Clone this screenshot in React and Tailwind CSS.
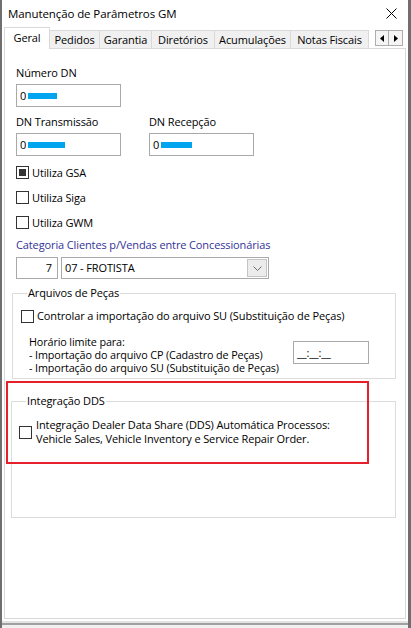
import React from "react";

const font = { fontFamily: '"Open Sans", "Liberation Sans", sans-serif' };

function CheckBox({ checked }) {
  return (
    <div className="w-[13px] h-[13px] border border-[#333] bg-white flex items-center justify-center shrink-0">
      {checked && <div className="w-[7px] h-[7px] bg-[#333]" />}
    </div>
  );
}

function NumBox({ width, bar }) {
  return (
    <div className={`${width} h-[23px] border border-[#a9a9a9] bg-white flex items-center pl-[3px]`}>
      <span>0</span>
      <div className="h-[6px] bg-[#00a4ef] ml-[2px]" style={{ width: bar }} />
    </div>
  );
}

const tabs = [
  { label: "Pedidos", w: "w-[50px]" },
  { label: "Garantia", w: "w-[52px]" },
  { label: "Diretórios", w: "w-[63px]" },
  { label: "Acumulações", w: "w-[76px]" },
  { label: "Notas Fiscais", w: "w-[78px]" },
];

export default function App() {
  return (
    <div
      className="relative w-[411px] h-[628px] overflow-hidden bg-[#f0f0f0] border-l-2 border-r-[3px] border-[#6f6f6f] flex flex-col text-[11px] leading-[14px] tracking-[-0.12px] text-black"
      style={font}
    >
      {/* title bar */}
      <div className="h-[27px] bg-white flex items-center justify-between pl-[6px] pr-[11px] shrink-0">
        <span className="text-[11.5px] tracking-[-0.1px]">Manutenção de Parâmetros GM</span>
        <svg width="11" height="11" viewBox="0 0 11 11">
          <path d="M0.5 0.5L10.5 10.5M10.5 0.5L0.5 10.5" stroke="#000" strokeWidth="1" />
        </svg>
      </div>

      {/* tabs */}
      <div className="h-[21px] bg-white flex items-end pl-[2px] pr-[2px] shrink-0 relative">
        <div className="w-[46px] h-[22px] bg-white border-t border-l border-r border-[#d9d9d9] -mb-px relative z-10 flex items-start justify-center pt-[3px]">
          Geral
        </div>
        {tabs.map((t) => (
          <div
            key={t.label}
            className={`${t.w} h-[18px] bg-[#f0f0f0] border-t border-r border-[#d9d9d9] flex items-center justify-center shrink-0`}
          >
            {t.label}
          </div>
        ))}
        <div className="absolute right-[5px] top-[3px] flex">
          <div className="w-[14px] h-[16px] border border-[#adadad] bg-[#f5f5f5] flex items-center justify-center">
            <svg width="4" height="7" viewBox="0 0 4 7"><path d="M4 0L0 3.5L4 7Z" fill="#000" /></svg>
          </div>
          <div className="w-[14px] h-[16px] border border-l-0 border-[#adadad] bg-[#f5f5f5] flex items-center justify-center">
            <svg width="4" height="7" viewBox="0 0 4 7"><path d="M0 0L4 3.5L0 7Z" fill="#000" /></svg>
          </div>
        </div>
      </div>

      {/* panel */}
      <div className="bg-white px-[2px] pb-[2px] shrink-0">
        <div className="h-[571px] bg-white border border-[#d9d9d9] pl-[11px] flex flex-col">
          <div className="mt-[17px]">Número DN</div>
          <div className="mt-[4px]">
            <NumBox width="w-[105px]" bar={29} />
          </div>

          <div className="mt-[8px] flex">
            <div className="w-[133px]">DN Transmissão</div>
            <div>DN Recepção</div>
          </div>
          <div className="mt-[4px] flex gap-[28px]">
            <NumBox width="w-[105px]" bar={37} />
            <NumBox width="w-[105px]" bar={31} />
          </div>

          <div className="mt-[4px]">
            {[
              ["Utiliza GSA", true],
              ["Utiliza Siga", false],
              ["Utiliza GWM", false],
            ].map(([label, checked]) => (
              <div key={label} className="h-[25px] flex items-center gap-[3px]">
                <CheckBox checked={checked} />
                <span>{label}</span>
              </div>
            ))}
          </div>

          <div className="mt-[3px] text-[#333399]">Categoria Clientes p/Vendas entre Concessionárias</div>
          <div className="mt-[5px] flex gap-[3px]">
            <div className="w-[42px] h-[22px] border border-[#a9a9a9] flex items-center justify-end pr-[5px]">7</div>
            <div className="w-[208px] h-[22px] border border-[#a9a9a9] flex items-center justify-between pl-[3px] pr-[1px]">
              <span>07 - FROTISTA</span>
              <div className="w-[20px] h-[18px] border border-[#c4c4c4] bg-[#ececec] flex items-center justify-center">
                <svg width="9" height="5" viewBox="0 0 9 5">
                  <path d="M0.5 0.5L4.5 4.5L8.5 0.5" stroke="#6b6b6b" fill="none" strokeWidth="1" />
                </svg>
              </div>
            </div>
          </div>

          {/* Arquivos de Peças */}
          <fieldset className="mt-[7px] -ml-[4px] w-[384px] h-[93px] border border-[#dcdcdc] pl-[8px] pb-[3px]">
            <legend className="ml-[6px] px-[1px]">Arquivos de Peças</legend>
            <div className="mt-[9px] flex items-center gap-[3px]">
              <CheckBox />
              <span>Controlar a importação do arquivo SU (Substituição de Peças)</span>
            </div>
            <div className="mt-[12px] ml-[8px] flex">
              <div className="w-[264px] text-[10.8px] leading-[13px]">
                <div>Horário limite para:</div>
                <div>- Importação do arquivo CP (Cadastro de Peças)</div>
                <div>- Importação do arquivo SU (Substituição de Peças)</div>
              </div>
              <div className="mt-[6px] w-[76px] h-[23px] border border-[#a9a9a9] flex items-center pl-[3px]">
                __:__:__
              </div>
            </div>
          </fieldset>

          {/* Integração DDS */}
          <fieldset className="mt-[15px] -ml-[5px] w-[385px] h-[124px] border border-[#dcdcdc] pl-[7px]">
            <legend className="ml-[7px] px-[1px]">Integração DDS</legend>
            <div className="mt-[10px] flex items-center gap-[4px]">
              <CheckBox />
              <div>
                <div>Integração Dealer Data Share (DDS) Automática Processos:</div>
                <div>Vehicle Sales, Vehicle Inventory e Service Repair Order.</div>
              </div>
            </div>
          </fieldset>
        </div>
      </div>

      <div className="h-[2px] bg-[#e3e3e3] shrink-0" />
      <div className="h-[2px] bg-[#a0a0a0] shrink-0" />
      <div className="flex-1 bg-[#f0f0f0]" />

      {/* annotation */}
      <div className="absolute left-[4px] top-[381px] w-[363px] h-[83px] border-2 border-[#e5202b] pointer-events-none" />
    </div>
  );
}
